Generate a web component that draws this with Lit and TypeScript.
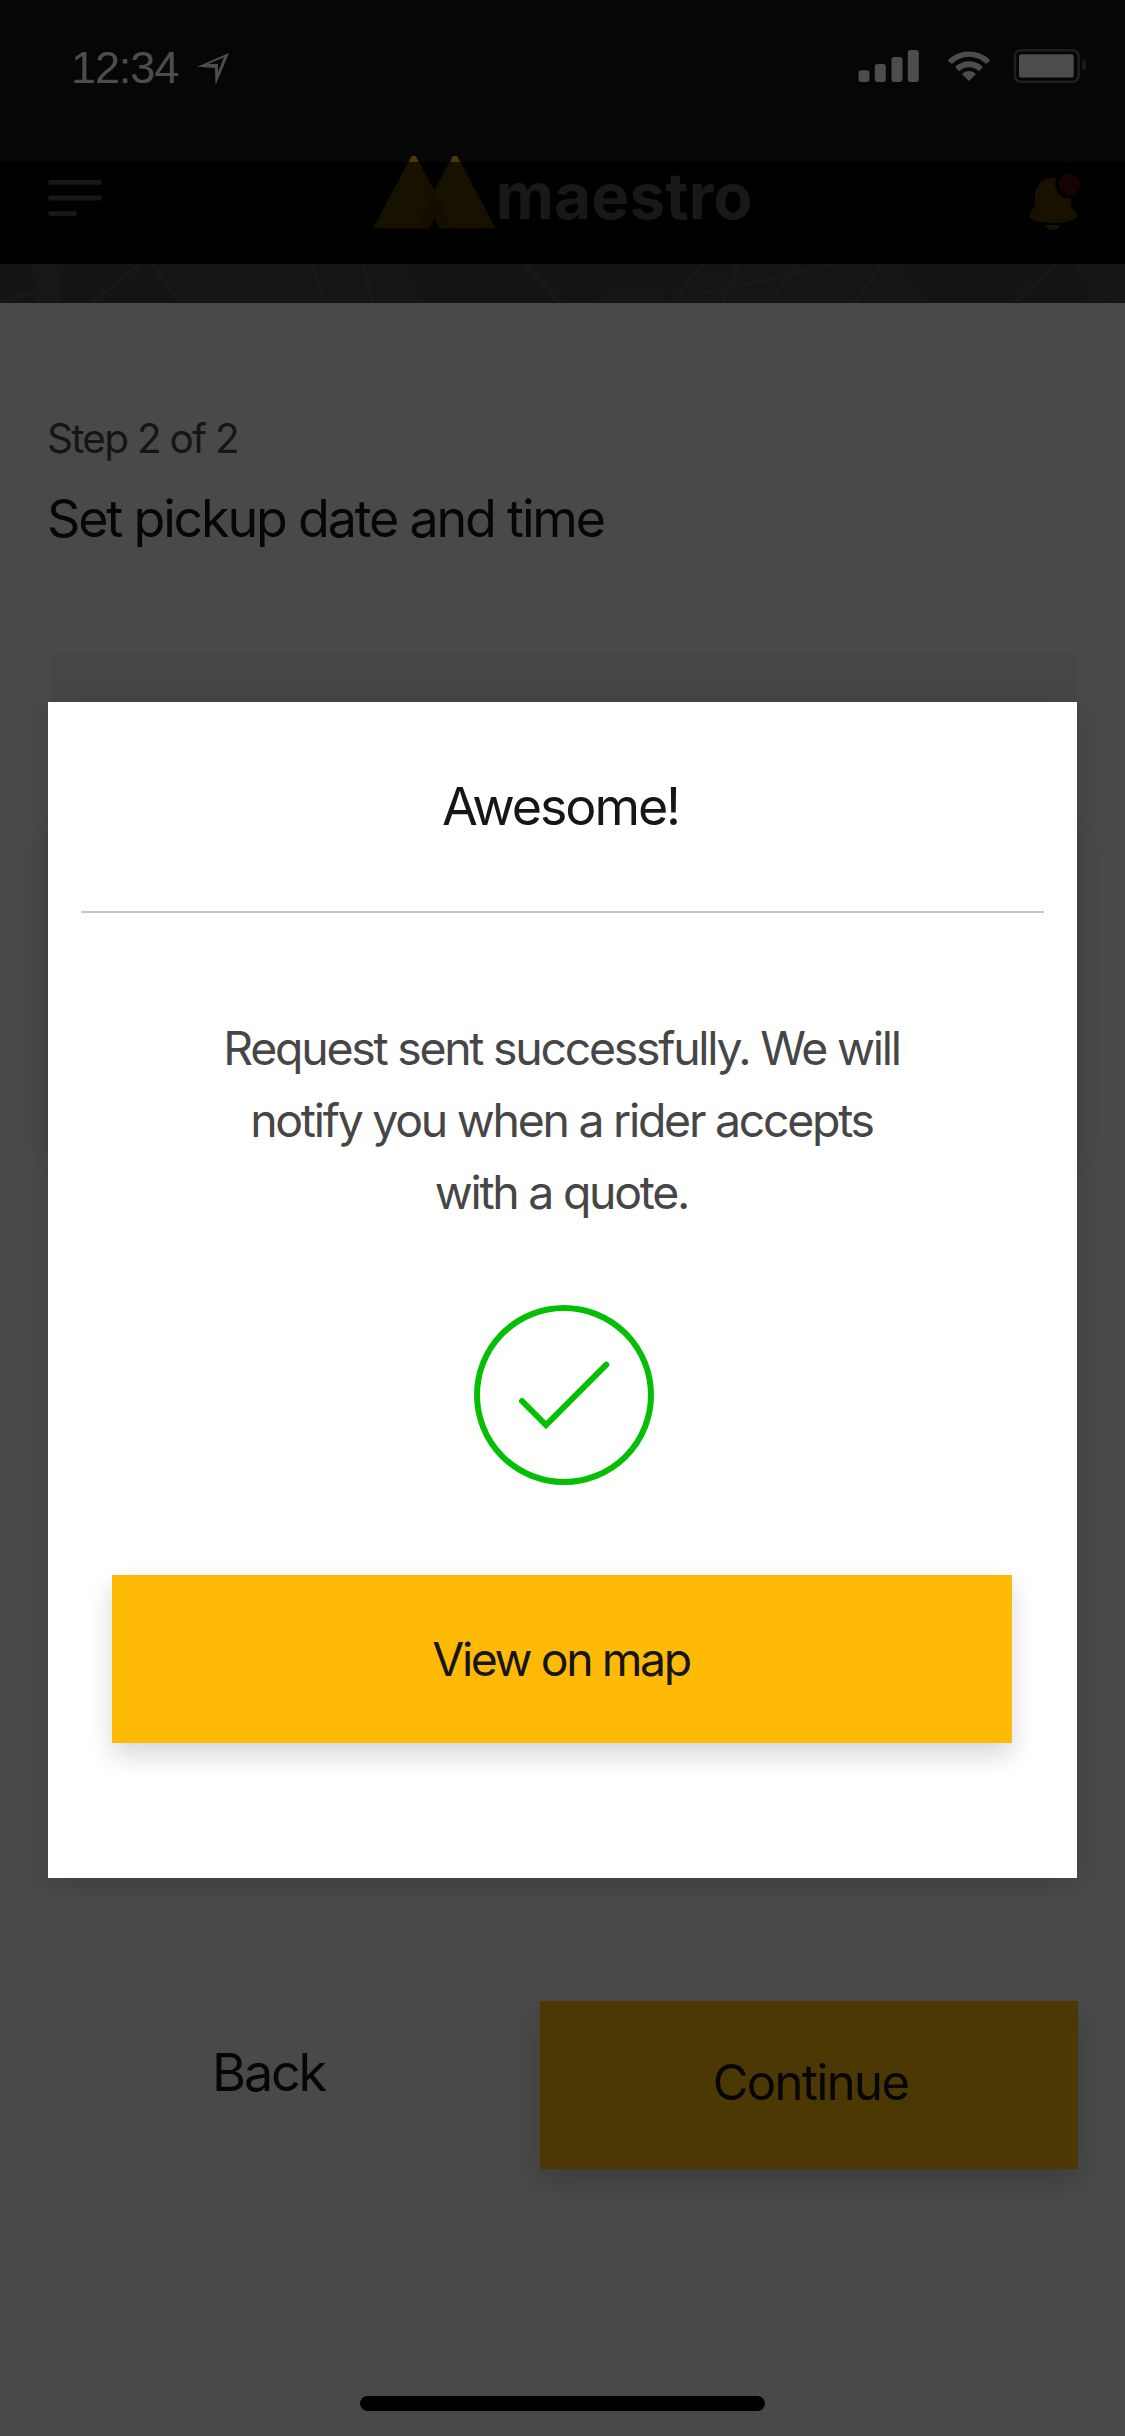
import { LitElement, html, css } from "lit";
import { customElement } from "lit/decorators.js";

@customElement("status-bar")
export class StatusBar extends LitElement {
  static styles = css`
    :host {
      display: flex;
      align-items: flex-start;
      justify-content: space-between;
      box-sizing: border-box;
      height: 162px;
      padding: 45px 38px 0 71px;
      background: #060606;
      color: #4d4d4d;
    }
    .left,
    .right {
      display: flex;
      align-items: flex-start;
    }
    .time {
      width: 109px;
      font: 45px/45px "Liberation Sans", Arial, sans-serif;
      letter-spacing: -1.1px;
    }
    .arrow {
      margin: 7px 0 0 17px;
    }
    .right {
      padding-top: 3px;
    }
    .signal {
      margin-top: 1px;
    }
    .wifi {
      margin: 2px 0 0 28.5px;
    }
    .battery {
      margin-left: 22px;
    }
    svg {
      display: block;
    }
  `;

  render() {
    return html`
      <div class="left">
        <span class="time">12:34</span>
        <svg class="arrow" width="34" height="34" viewBox="197 52 34 34" fill="#4d4d4d">
          <path
            fill-rule="evenodd"
            d="M197.3 66.8L229 53L215.6 85L214.9 68ZM208.3 64L218 64L218 72.3L223.9 57.3Z"
          />
        </svg>
      </div>
      <div class="right">
        <svg class="signal" width="61" height="35" viewBox="857.5 49 61 35" fill="#4d4d4d">
          <rect x="858" y="70.3" width="11" height="11.7" rx="2.7" />
          <rect x="874.3" y="64" width="11" height="18" rx="2.7" />
          <rect x="891" y="57" width="11" height="25" rx="2.7" />
          <rect x="907.3" y="50" width="11" height="32" rx="2.7" />
        </svg>
        <svg class="wifi" width="44" height="32" viewBox="-22 -31 44 32" fill="#4d4d4d">
          <path d="M0 0L-7.1 -7.1A10 10 0 0 1 7.1 -7.1Z" />
          <path d="M-9.8 -9.8A13.9 13.9 0 0 1 9.8 -9.8L14 -14A19.9 19.9 0 0 0 -14 -14Z" />
          <path d="M-17.1 -17.1A24.2 24.2 0 0 1 17.1 -17.1L21.3 -20.6A30 30 0 0 0 -21.3 -20.6Z" />
        </svg>
        <svg class="battery" width="74" height="36" viewBox="1013.3 48 74 36">
          <rect x="1015.2" y="50.2" width="63.8" height="31.6" rx="6" fill="none" stroke="#1e1e1e" stroke-width="2.6" />
          <rect x="1019.3" y="54.3" width="54.7" height="23.3" rx="2.6" fill="#4d4d4d" />
          <path d="M1082.7 59.3Q1086.3 61 1086.3 65.3T1082.7 71.3Z" fill="#1e1e1e" />
        </svg>
      </div>
    `;
  }
}

@customElement("app-header")
export class AppHeader extends LitElement {
  static styles = css`
    :host {
      display: grid;
      grid-template-columns: 324.7px 1fr 52px;
      align-items: start;
      box-sizing: border-box;
      height: 102px;
      padding: 0 44px 0 48px;
      background: #000;
    }
    svg {
      display: block;
      overflow: visible;
    }
    .menu {
      margin-top: 17px;
    }
    .brand {
      display: flex;
      align-items: flex-start;
    }
    .mountains {
      margin-top: -7px;
    }
    .word {
      font: 700 64px/64px Inter, sans-serif;
      color: #181818;
      margin-top: 2px;
    }
    .bell {
      margin-top: 11px;
    }
  `;

  render() {
    return html`
      <svg class="menu" width="54" height="38" viewBox="48 179 54 38" fill="#181818">
        <rect x="48" y="180" width="54" height="4.8" rx="2.4" />
        <rect x="48" y="195.6" width="54" height="4.8" rx="2.4" />
        <rect x="48" y="211.2" width="29" height="4.8" rx="2.4" />
      </svg>
      <div class="brand">
        <svg class="mountains" width="123" height="74" viewBox="372.7 155 123 74">
          <path d="M411.2 156H415.4L434 190.5L454 228.3L439 228.3L434 217.3L429 228.3H372.7Z" fill="#171100" />
          <path d="M452.6 156H456.8L495.3 228.3H439L434 217.3L429 228.3L414 228.3L434 190.5Z" fill="#171100" />
          <path d="M434 190.5L454 228.3H439L434 217.3L429 228.3H414Z" fill="#150d00" />
          <path d="M411.2 156H415.4L418.4 162H408.4ZM452.6 156H456.8L459.8 162H449.8Z" fill="#4c3802" />
        </svg>
        <span class="word">maestro</span>
      </div>
      <svg class="bell" width="52" height="58" viewBox="1029 173 52 58">
        <path
          d="M1053 177.7C1042 177.7 1035 186 1035 196V204.5C1035 208 1029.2 211 1029.2 215.5C1029.2 220.5 1042 223 1053 223C1064 223 1077.2 220.5 1077.2 215.5C1077.2 211 1071 208 1071 204.5V198L1069.7 198.3A13.7 13.7 0 0 1 1057 178Z"
          fill="#171100"
        />
        <path d="M1045.6 225H1060.4C1059 231.8 1047 231.8 1045.6 225Z" fill="#171100" />
        <circle cx="1069.5" cy="184.5" r="10.7" fill="#170203" />
      </svg>
    `;
  }
}

@customElement("map-strip")
export class MapStrip extends LitElement {
  static styles = css`
    :host {
      display: block;
      height: 39px;
      background: #141414;
    }
    svg {
      display: block;
    }
  `;

  render() {
    return html`
      <svg width="1125" height="39" viewBox="0 0 1125 39">
        <path
          d="M152 0H411Q418 24 427 39H181ZM590 39Q615 20 650 22Q670 28 668 39ZM670 39L700 8L775 0H905Q905 15 917 22Q932 26 930 39ZM1074 0H1125V39H1080Q1090 28 1082 18Z"
          fill="#161513"
        />
        <path d="M32 0H57L62 39H35Z" fill="#171718" />
        <path
          d="M139 0L93 39M152 0L181 39M311 0L324 39M363 0L373 39M525 0L560 39M702 0L673 39M738 0L723 39M700 30L775 14L832 0M798 0L775 30M881 0L855 39M1056 0L1014 39M1074 0L1116 36M0 38L34 28"
          fill="none"
          stroke="#171819"
          stroke-width="4"
        />
      </svg>
    `;
  }
}

@customElement("success-dialog")
export class SuccessDialog extends LitElement {
  static styles = css`
    :host {
      display: flex;
      flex-direction: column;
      align-items: center;
      box-sizing: border-box;
      padding: 0 33px;
      background: #fff;
      box-shadow: 0 6px 24px rgba(0, 0, 0, 0.14);
    }
    .title {
      margin: 1px 4px 0 0;
      font-weight: 400;
      font-size: 52px;
      line-height: 208px;
      letter-spacing: -2.1px;
      color: #16161a;
    }
    .rule {
      align-self: stretch;
      height: 2px;
      background: #c4c4c4;
    }
    .message {
      margin: 99px 2px 0 0;
      font-size: 46.4px;
      line-height: 72px;
      letter-spacing: -2.25px;
      text-align: center;
      white-space: nowrap;
      color: #464646;
    }
    .check {
      display: block;
      margin: 76px 0 0 3px;
    }
    .action {
      align-self: stretch;
      height: 168px;
      margin: 89px 32px 0 31px;
      border: 0;
      padding: 0 2px 0 0;
      font: 400 46.4px/168px Inter, sans-serif;
      letter-spacing: -2.4px;
      color: #16161a;
      background: #ffba05;
      box-shadow: 0 12px 24px rgba(0, 0, 0, 0.16);
    }
  `;

  render() {
    return html`
      <h2 class="title">Awesome!</h2>
      <div class="rule"></div>
      <p class="message">
        Request sent successfully. We will<br />notify you when a rider accepts<br />with a quote.
      </p>
      <svg class="check" width="182" height="182" viewBox="-91 -91 182 182" fill="none" stroke="#04bf04" stroke-width="6">
        <circle r="87" />
        <path d="M-42 6L-18 30L42.3 -30.3" stroke-linecap="round" />
      </svg>
      <button class="action">View on map</button>
    `;
  }
}

@customElement("app-root")
export class AppRoot extends LitElement {
  static styles = css`
    :host {
      display: block;
      position: relative;
      width: 1125px;
      height: 2436px;
      overflow: hidden;
      background: #494949;
      font-family: Inter, sans-serif;
    }
    .page {
      display: flex;
      flex-direction: column;
      height: 100%;
    }
    .intro {
      display: flex;
      flex-direction: column;
      padding: 105px 47px 0;
    }
    .step {
      font-size: 40.5px;
      line-height: 61px;
      letter-spacing: -1.75px;
      color: #151515;
    }
    .heading {
      margin: 10px 0 0;
      font-weight: 400;
      font-size: 52px;
      line-height: 80px;
      letter-spacing: -2.2px;
      color: #060606;
    }
    .calendar {
      box-sizing: border-box;
      height: 1120px;
      margin: 95px 48px 0 51px;
      padding-top: 176px;
      background: #464646;
    }
    .slots {
      height: 330px;
      background: #464646;
      box-shadow: 0 0 27px rgba(0, 0, 0, 0.06);
    }
    .actions {
      display: flex;
      margin: 227px 47px 0 0;
    }
    .actions button {
      border: 0;
      padding: 0;
      font-family: inherit;
      font-weight: 400;
      color: #060606;
    }
    .actions .back {
      flex: 1;
      height: 142px;
      padding-right: 3px;
      background: none;
      font-size: 52px;
      letter-spacing: -2.1px;
    }
    .actions .continue {
      width: 538px;
      height: 168px;
      padding: 0 0 5px 3px;
      background: #4c3802;
      font-size: 49px;
      letter-spacing: -1.6px;
      box-shadow: 0 12px 24px rgba(0, 0, 0, 0.16);
    }
    .home {
      align-self: center;
      width: 405px;
      height: 15px;
      margin: auto 0 25px;
      border-radius: 8px;
      background: #000;
    }
    .dialog {
      position: absolute;
      top: 702px;
      left: 48px;
      width: 1029px;
      height: 1176px;
    }
  `;

  render() {
    return html`
      <div class="page">
        <status-bar></status-bar>
        <app-header></app-header>
        <map-strip></map-strip>
        <div class="intro">
          <span class="step">Step 2 of 2</span>
          <h1 class="heading">Set pickup date and time</h1>
        </div>
        <div class="calendar"><div class="slots"></div></div>
        <div class="actions">
          <button class="back">Back</button>
          <button class="continue">Continue</button>
        </div>
        <div class="home"></div>
      </div>
      <success-dialog class="dialog"></success-dialog>
    `;
  }
}
